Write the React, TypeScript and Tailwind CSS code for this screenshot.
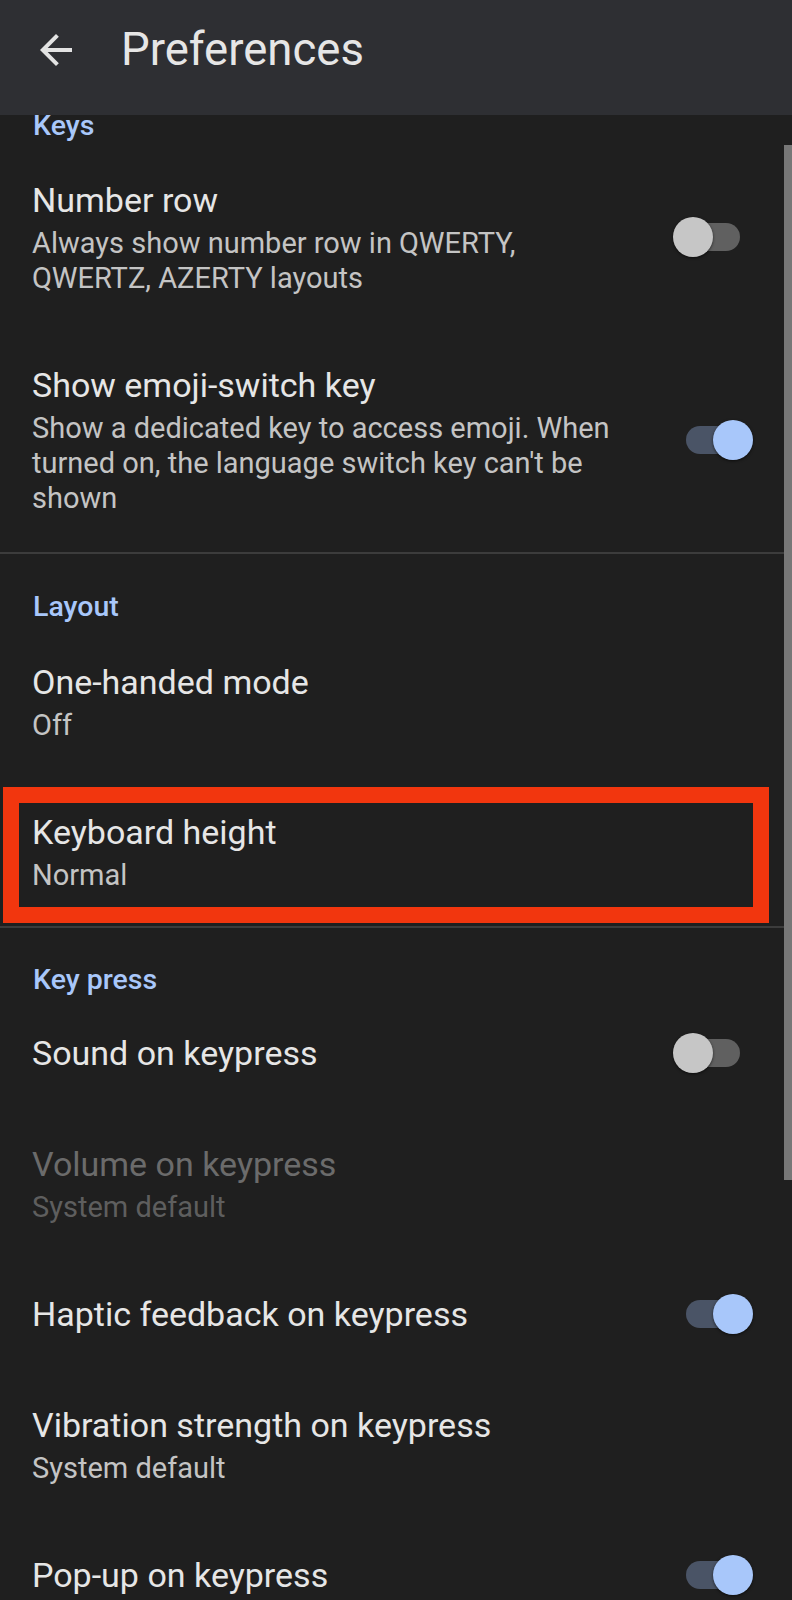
import React from "react";

const Toggle = ({ on }: { on: boolean }) => (
  <div className="relative w-[54px] h-[28px] shrink-0">
    <div className={on ? "absolute inset-0 rounded-full bg-[#4a5466]" : "absolute inset-0 rounded-full bg-[#606060]"} />
    <div
      className={
        on
          ? "absolute top-[-6px] right-[-13px] w-[40px] h-[40px] rounded-full bg-[#a8c7fa] shadow-[0_1px_3px_rgba(0,0,0,0.6)]"
          : "absolute top-[-6px] left-[-13px] w-[40px] h-[40px] rounded-full bg-[#c6c6c6] shadow-[0_1px_3px_rgba(0,0,0,0.6)]"
      }
    />
  </div>
);

type PrefProps = {
  title: string;
  summary?: React.ReactNode;
  toggle?: boolean;
  disabled?: boolean;
  pb?: string;
  children?: React.ReactNode;
};

const Pref = ({ title, summary, toggle, disabled, pb, children }: PrefProps) => (
  <div className={`relative flex items-center pl-[32px] pr-[52px] pt-[34px] ${pb ?? "pb-[33px]"}`}>
    <div className="flex-1 min-w-0">
      <div className={disabled ? "text-[34px] leading-[44px] text-[#6b6b6b]" : "text-[34px] leading-[44px] text-[#e6e6e6]"}>
        {title}
      </div>
      {summary && (
        <div className={disabled ? "mt-[4px] text-[29px] leading-[35px] text-[#5e5e5e]" : "mt-[4px] text-[29px] leading-[35px] text-[#c4c4c4]"}>
          {summary}
        </div>
      )}
    </div>
    {toggle !== undefined && <Toggle on={toggle} />}
    {children}
  </div>
);

const Category = ({ label, className }: { label: string; className: string }) => (
  <div className={className}>
    <div className="pl-[33px] text-[28.5px] leading-[22px] font-medium text-[#a8c7fa]">{label}</div>
  </div>
);

export default function App() {
  return (
    <div className="relative w-full h-[1600px] overflow-hidden bg-[#1f1f1f] font-[family-name:Roboto,sans-serif]">
      <div className="h-[115px] bg-[#2e2f33]">
        <div className="h-[100px] flex items-center">
          <svg className="ml-[32px] w-[48px] h-[48px]" viewBox="0 0 24 24" fill="#e3e3e3">
            <path d="M20 11H7.83l5.59-5.59L12 4l-8 8 8 8 1.41-1.41L7.83 13H20v-2z" />
          </svg>
          <div className="ml-[41px] text-[45.5px] leading-[44px] text-[#e6e6e6]">Preferences</div>
        </div>
      </div>

      <Category label="Keys" className="pb-[7px]" />
      <Pref
        title="Number row"
        summary={
          <>
            Always show number row in QWERTY,
            <br />
            QWERTZ, AZERTY layouts
          </>
        }
        toggle={false}
      />
      <Pref
        title="Show emoji-switch key"
        summary={
          <>
            Show a dedicated key to access emoji. When
            <br />
            turned on, the language switch key can't be
            <br />
            shown
          </>
        }
        toggle={true}
        pb="pb-[36px]"
      />
      <div className="h-[2px] bg-[#3c3c3c]" />

      <Category label="Layout" className="pt-[42px] pb-[8px]" />
      <Pref title="One-handed mode" summary="Off" />
      <Pref title="Keyboard height" summary="Normal">
        <div className="absolute left-[3px] right-[23px] top-[11px] bottom-[3px] border-[16px] border-[#f2360e]" />
      </Pref>
      <div className="h-[2px] bg-[#3c3c3c]" />

      <Category label="Key press" className="pt-[41px] pb-[6px]" />
      <Pref title="Sound on keypress" toggle={false} />
      <Pref title="Volume on keypress" summary="System default" disabled />
      <Pref title="Haptic feedback on keypress" toggle={true} />
      <Pref title="Vibration strength on keypress" summary="System default" />
      <Pref title="Pop-up on keypress" toggle={true} />

      <div className="absolute right-0 top-[145px] w-[8px] h-[1035px] bg-[#777777]" />
    </div>
  );
}
